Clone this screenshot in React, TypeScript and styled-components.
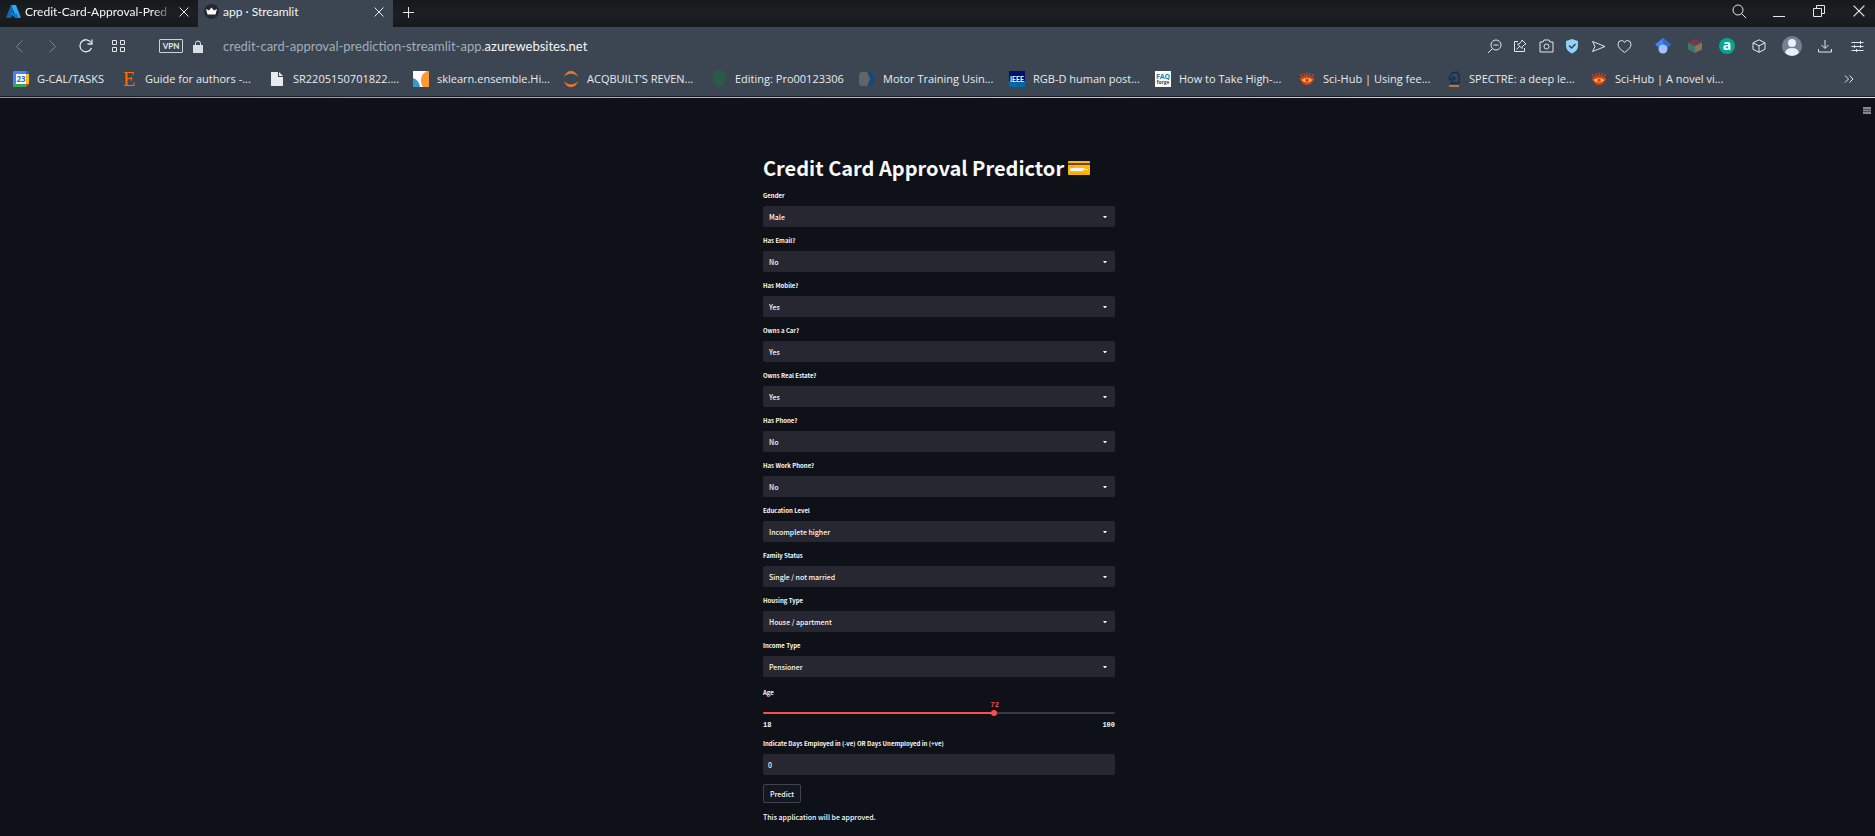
import React, { useState } from "react";
import type { ReactNode } from "react";
import styled, { createGlobalStyle, css } from "styled-components";

const GlobalStyle = createGlobalStyle`
  *, *::before, *::after { box-sizing: border-box; }
  body { margin: 0; background: #0e1117; }
  button, input, select { font: inherit; color: inherit; margin: 0; }
`;

/* ---------- browser window ---------- */

const BrowserChrome = styled.header`
  font-family: Lato, "Open Sans", sans-serif;
  font-size: 12px;
  line-height: 16px;
  color: #e8ebed;
  background: #3b4652;
`;

const TabStrip = styled.div`
  display: flex;
  height: 27px;
  background: linear-gradient(#16191c, #1c2023 50%, #171a1d);
`;

const Tab = styled.div<{ $active?: boolean }>`
  display: flex;
  align-items: center;
  gap: 4px;
  width: ${(p) => (p.$active ? 195 : 198)}px;
  padding: 0 4px 4px 6px;
  background: ${(p) => (p.$active ? "#3b4652" : "transparent")};
`;

const TabTitle = styled.span<{ $fade?: boolean }>`
  flex: 1;
  min-width: 0;
  white-space: nowrap;
  color: #f4f6f7;
  mask-image: ${(p) => (p.$fade ? "linear-gradient(to right, #000 88%, #0003)" : "none")};
`;

const IconButton = styled.button<{ $width: number; $dim?: boolean }>`
  display: flex;
  align-items: center;
  justify-content: center;
  flex: none;
  width: ${(p) => p.$width}px;
  padding: 0;
  border: 0;
  background: none;
  color: ${(p) => (p.$dim ? "#78828c" : "#e3e7ea")};
`;

const WindowControls = styled.div`
  display: flex;
  margin-left: auto;
  padding: 0 0 5px;
  margin-right: -4px;
`;

const Toolbar = styled.div`
  display: flex;
  align-items: center;
  height: 38px;
  padding: 0 2px 0 3px;
`;

const ToolGroup = styled.div`
  display: flex;
  align-items: center;
`;

const AddressGroup = styled.div`
  display: flex;
  align-items: center;
  flex: 1;
  gap: 10px;
  padding-left: 24px;
`;

const VpnBadge = styled.button`
  width: 24px;
  height: 14px;
  padding: 0;
  border: 1px solid #ccd1d5;
  border-radius: 1px;
  background: none;
  font-size: 8px;
  font-weight: 700;
  line-height: 12px;
  text-align: center;
`;

const Address = styled.a`
  padding-left: 10px;
  font-size: 13px;
  color: #a3adb7;
  text-decoration: none;
  white-space: nowrap;
  strong { font-weight: 400; color: #f4f6f7; }
`;

const ExtensionGroup = styled(ToolGroup)`
  padding-left: 10px;
`;

const BookmarkBar = styled.nav`
  display: flex;
  align-items: center;
  height: 31px;
  padding: 0 21px 3px 13px;
  font-family: "Open Sans", sans-serif;
  font-size: 11px;
`;

const Bookmark = styled.a<{ $width: number }>`
  display: flex;
  align-items: center;
  gap: 8px;
  flex: none;
  width: ${(p) => p.$width}px;
  color: inherit;
  text-decoration: none;
  white-space: nowrap;
`;

const MoreBookmarks = styled.button`
  display: flex;
  margin-left: auto;
  padding: 0;
  border: 0;
  background: none;
`;

const AccentLine = styled.div`
  height: 2px;
  border-top: 1px solid #1b1d22;
  background: linear-gradient(to right, #f0685c, #f99f5a 35%, #fbc95f 70%, #fbf06c);
`;

/* ---------- app page ---------- */

const AppHeader = styled.div`
  display: flex;
  justify-content: flex-end;
  padding: 9px 4px 0;
`;

const MenuButton = styled.button`
  display: flex;
  padding: 0;
  border: 0;
  background: none;
`;

const Main = styled.main`
  padding: 41px 0 16px 3px;
  font-family: "Noto Sans CJK SC", sans-serif;
  font-size: 7px;
  font-weight: 500;
  line-height: 10px;
  color: #fafafa;
`;

const Column = styled.form`
  display: flex;
  flex-direction: column;
  gap: 9px;
  max-width: 352px;
  margin: 0 auto;
`;

const Title = styled.h1`
  display: flex;
  align-items: center;
  gap: 4px;
  margin: 0;
  padding-bottom: 1px;
  font-size: 20px;
  font-weight: 700;
  line-height: 26px;
  white-space: nowrap;
`;

const Field = styled.div`
  display: flex;
  flex-direction: column;
  gap: 5px;
`;

const SliderField = styled(Field)`
  gap: 3px;
  padding-top: 2px;
`;

const Label = styled.label`
  font-size: 6px;
  font-weight: 700;
  line-height: 10px;
`;

const controlStyle = css`
  width: 100%;
  height: 21px;
  border: 0;
  border-radius: 2px;
  background-color: #262730;
  outline: none;
  appearance: none;
`;

const SelectBox = styled.div`
  display: grid;
  align-items: center;
  > * { grid-area: 1 / 1; }
  > svg { justify-self: end; margin-right: 8px; pointer-events: none; }
`;

const Select = styled.select`
  ${controlStyle}
  padding: 0 6px;
`;

const NumberInput = styled.input`
  ${controlStyle}
  padding: 0 5px;
  appearance: textfield;
  &::-webkit-inner-spin-button { display: none; }
`;

const SliderBox = styled.div`
  font-family: "Liberation Mono", monospace;
  font-size: 7px;
  font-weight: 700;
`;

const SliderValue = styled.output`
  display: block;
  width: 20px;
  height: 8px;
  margin-left: -10px;
  line-height: 8px;
  text-align: center;
  color: #ff4b4b;
`;

const Range = styled.input`
  display: block;
  width: 100%;
  height: 8px;
  background: transparent;
  appearance: none;
  &::-webkit-slider-runnable-track {
    height: 2px;
    border-radius: 1px;
    background: linear-gradient(to right, #ff4b4b var(--fill), #373a42 var(--fill));
  }
  &::-webkit-slider-thumb {
    width: 6px;
    height: 6px;
    margin-top: -2px;
    border-radius: 50%;
    background: #ff4b4b;
    appearance: none;
  }
`;

const SliderTicks = styled.div`
  display: flex;
  justify-content: space-between;
  padding-top: 3px;
`;

const SubmitButton = styled.button`
  align-self: flex-start;
  width: 38px;
  height: 19px;
  padding: 0;
  border: 1px solid #41444c;
  border-radius: 2px;
  background: #131720;
`;

const Result = styled.p`
  margin: 0;
`;

/* ---------- icons ---------- */

const Svg = styled.svg`
  flex: none;
  overflow: visible;
`;

type IconProps = { w?: number; h?: number; box?: string; sw?: number; children: ReactNode };
const Icon = ({ w = 16, h = w, box = `0 0 ${w} ${h}`, sw = 1, children }: IconProps) => (
  <Svg width={w} height={h} viewBox={box} fill="none" stroke="currentColor" strokeWidth={sw} aria-hidden="true">
    {children}
  </Svg>
);

const CloseIcon = ({ size = 10 }: { size?: number }) => (
  <Icon w={size} box="0 0 10 10" sw={1}><path d="M.5.5l9 9M9.5.5l-9 9" /></Icon>
);

const AzureIcon = () => (
  <Icon w={15}>
    <g stroke="none">
      <path d="M5 1h5L5 14H1.200Q0 14 .5 12.500z" fill="#1267b4" />
      <path d="M5.500 1h4.500l4.500 11.800Q14.800 14 13.600 14H9.800L4.600 9.600H8.500z" fill="#2fa8ee" />
      <path d="M4.600 9.600H11L12.500 14H9.800z" fill="#0b78d0" />
    </g>
  </Icon>
);

const CrownIcon = () => (
  <Icon w={15}>
    <g stroke="none">
      <circle cx="7.500" cy="7.500" r="7.500" fill="#262730" />
      <path d="M2 5l3 1.500L7.500 3.500 10 6.500 13 5l-1.500 5.500h-8z" fill="#fff" />
    </g>
  </Icon>
);

const SciHubIcon = () => (
  <Icon w={16}>
    <path d="M3.500 6.500L1.500 3M5.800 5.500L4.800 2M8 5.500V1.500M10.200 5.500l1-3.500M12.500 6.500l2-3.500" stroke="#d0432b" strokeWidth="1.200" />
    <path d="M.5 7.500Q8 2 15.500 7.500L14 10q-2 4-6 4t-6-4z" fill="#d23f26" stroke="none" />
    <path d="M2.500 9Q8 5 13.500 9 8 14 2.500 9z" fill="#f9c32c" stroke="none" />
    <circle cx="8" cy="9.200" r="1.800" fill="#d23f26" stroke="none" />
  </Icon>
);

const bookmarkIcons: Record<string, ReactNode> = {
  calendar: (
    <Icon w={16}>
      <g stroke="none">
        <path d="M1 0h12v3H0V1q0-1 1-1z" fill="#4285f4" />
        <path d="M13 0h2q1 0 1 1v2h-3z" fill="#1967d2" />
        <path d="M0 3h3v10H0z" fill="#4285f4" />
        <path d="M13 3h3v10h-3z" fill="#fbbc04" />
        <path d="M0 13h13v3H1q-1 0-1-1z" fill="#34a853" />
        <path d="M13 13h3l-3 3z" fill="#ea4335" />
        <path d="M3 3h10v10H3z" fill="#fff" />
        <text x="8" y="11" fontSize="8" fontWeight="700" textAnchor="middle" fill="#2b6bdc">23</text>
      </g>
    </Icon>
  ),
  elsevier: (
    <Icon w={14} h={16}>
      <text x="6" y="15" fontFamily="Liberation Serif, serif" fontSize="20" textAnchor="middle" fill="#ff6c00" stroke="none">E</text>
    </Icon>
  ),
  file: (
    <Icon w={16}>
      <path d="M2 1h7v5h5v9H2z" fill="#e8ebed" stroke="none" />
      <path d="M10 1l4 4h-4z" fill="#e8ebed" stroke="none" />
    </Icon>
  ),
  sklearn: (
    <Icon w={16}>
      <g stroke="none">
        <path d="M0 0h16v16H0z" fill="#fff" />
        <path d="M0 7q6 2 7 9H0z" fill="#3499cd" />
        <path d="M16 0h-2Q8 3 8 9q0 5 2 7h6z" fill="#ff9a33" />
      </g>
    </Icon>
  ),
  jupyter: (
    <Icon w={16}>
      <path d="M1 5.500Q3.500 0 8 0t7 5.500Q11.500 2.500 8 2.500T1 5.500zM1 10.500Q3.500 16 8 16t7-5.500Q11.500 13.500 8 13.500t-7-3z" fill="#f37726" stroke="none" />
    </Icon>
  ),
  shield: (
    <Icon w={16}>
      <path d="M3 0h10l1 2v7q0 4-6 7-6-3-6-7V2z" fill="#285c46" stroke="none" />
      <path d="M4 4.500h8M4 8.500h3M9 8.500h3M6 11.500h4" stroke="#36514d" />
    </Icon>
  ),
  arrow: (
    <Icon w={16}>
      <g stroke="none">
        <path d="M2 1h6l3 7-3 7H2q-2-1-2-3V4q0-2 2-3z" fill="#636466" />
        <path d="M9 1h3l4 7-4 7H9l3-7z" fill="#0d4b86" />
      </g>
    </Icon>
  ),
  ieee: (
    <Icon w={16}>
      <g stroke="none">
        <path d="M0 0h16v16H0z" fill="#05106c" />
        <path d="M0 10h16v6H0z" fill="#0369a5" />
        <text x="8" y="11" fontSize="7" fontWeight="700" textAnchor="middle" fontFamily="Lato, sans-serif" fill="#fff">IEEE</text>
      </g>
    </Icon>
  ),
  faq: (
    <Icon w={16}>
      <g stroke="none">
        <path d="M0 0h16v16H0z" fill="#fff" />
        <text x="8" y="8" fontSize="7" fontWeight="700" textAnchor="middle" fill="#1480bd">FAQ</text>
        <text x="8" y="13" fontSize="5" fontWeight="700" textAnchor="middle" fill="#45494d">forge</text>
      </g>
    </Icon>
  ),
  scihub: <SciHubIcon />,
  knight: (
    <Icon w={14} h={16}>
      <path d="M4 12Q5 9 8 8L7 6 3 9 2 7l3-5 5-1q3 3 2 11z" stroke="#0c2c55" strokeWidth="1.300" />
      <path d="M2 15h10" stroke="#e88a2c" strokeWidth="1.500" />
    </Icon>
  ),
};

const bookmarks: [string, string, number][] = [
  ["calendar", "G-CAL/TASKS", 110],
  ["elsevier", "Guide for authors -...", 146],
  ["file", "SR2205150701822....", 144],
  ["sklearn", "sklearn.ensemble.Hi...", 150],
  ["jupyter", "ACQBUILT'S REVEN...", 148],
  ["shield", "Editing: Pro00123306", 148],
  ["arrow", "Motor Training Usin...", 150],
  ["ieee", "RGB-D human post...", 146],
  ["faq", "How to Take High-...", 144],
  ["scihub", "Sci-Hub | Using fee...", 148],
  ["knight", "SPECTRE: a deep le...", 144],
  ["scihub", "Sci-Hub | A novel vi...", 148],
];

const pageTools: [string, ReactNode][] = [
  ["Zoom", <Icon w={15}><circle cx="9" cy="6" r="5" /><path d="M5.500 9.500L1 14M6.500 6h5" /></Icon>],
  ["Edit page", <Icon w={14}><path d="M5 2.500H1.500v10h10V9M3.500 10.500L7 7M9 1l4 4-1.500.5-2.500 2.500v1.500L4.500 5H6l2.500-2.500z" /></Icon>],
  ["Snapshot", <Icon w={15}><path d="M1 3h3l1-2h5l1 2h3v10H1z" /><circle cx="7.500" cy="7.500" r="2.500" /></Icon>],
  ["Protection", <Icon w={14}><path d="M7 0l6 2v5q0 5-6 7.500Q1 12 1 7V2z" fill="#8fd3fb" stroke="none" /><path d="M4 6.500L6.500 9 10.500 5" stroke="#34424f" strokeWidth="1.500" /></Icon>],
  ["Send", <Icon w={15}><path d="M1.500 2.500l12.500 5-12.500 5 2.500-5z" /></Icon>],
  ["Favourite", <Icon w={15}><path d="M7.500 13.500Q1 9 1 5.500 1 1.500 4.500 1.500q2 0 3 2 1-2 3-2Q14 1.500 14 5.500q0 3.500-6.500 8z" /></Icon>],
];

const extensions: [string, number, ReactNode][] = [
  ["Scholar", 32, <Icon w={16}><g stroke="none"><path d="M8 0l8 6.500-5 4H5l-5-4z" fill="#4285f4" /><path d="M8 0l8 6.500-5 4L8 7z" fill="#356ac3" /><circle cx="8" cy="11" r="4.500" fill="#a0c3ff" /></g></Icon>],
  ["Cube", 32, <Icon w={14}><g stroke="none"><path d="M7 0l7 3.500L7 7 0 3.500z" fill="#76384a" /><path d="M0 3.500L7 7v7L0 10.500z" fill="#3f7468" /><path d="M14 3.500L7 7v7l7-3.500z" fill="#82765a" /></g></Icon>],
  ["Assistant", 32, <Icon w={16}><circle cx="8" cy="8" r="8" fill="#05a596" stroke="none" /><text x="8" y="12" fontSize="14" fontWeight="700" fontFamily="Open Sans, sans-serif" textAnchor="middle" fill="#fff" stroke="none">a</text></Icon>],
  ["Extensions", 32, <Icon w={14}><path d="M7 .8l6 3v6.500l-6 3-6-3V3.800zM1 3.800l6 3 6-3M7 6.800v6.500" /></Icon>],
  ["Profile", 34, <Icon w={20}><g stroke="none"><circle cx="10" cy="10" r="10" fill="#718293" /><circle cx="10" cy="7" r="4" fill="#e9eef5" /><path d="M3 17q1-5 7-5t7 5q-3 3-7 3t-7-3z" fill="#e9eef5" /></g></Icon>],
  ["Downloads", 32, <Icon w={14}><path d="M7 1v8M3.500 6L7 9.500 10.500 6M.5 10v3h13v-3" /></Icon>],
  ["Easy setup", 32, <Icon w={13}><path d="M.5 2.500h12M.5 6.500h12M.5 10.500h12M9.500 1v3M3.500 5v3M9.500 5v3M5.500 9v3" /></Icon>],
];

const CardIcon = () => (
  <Icon w={22} h={15}>
    <g stroke="none">
      <path d="M1 0h20q1 0 1 1v12q0 1-1 1H1q-1 0-1-1V1q0-1 1-1z" fill="#ffb900" />
      <path d="M0 2h22v2H0z" fill="#6e4136" />
      <path d="M2 8h14l1-1H3z" fill="#f4f4f4" />
      <path d="M2 8h13v2H2z" fill="#f4f4f4" />
      <path d="M15 8h5v1h-5z" fill="#ffe9b0" />
      <path d="M2 5h4v1H2zM2 12h17v1H2z" fill="#e89c0c" />
    </g>
  </Icon>
);

const Caret = () => (
  <svg width="4" height="2" viewBox="0 0 4 2" aria-hidden="true"><path d="M0 0h4L2.500 2h-1z" fill="#fafafa" /></svg>
);

/* ---------- form ---------- */

const selects: [string, string[], string][] = [
  ["Gender", ["Male", "Female"], "Male"],
  ["Has Email?", ["Yes", "No"], "No"],
  ["Has Mobile?", ["Yes", "No"], "Yes"],
  ["Owns a Car?", ["Yes", "No"], "Yes"],
  ["Owns Real Estate?", ["Yes", "No"], "Yes"],
  ["Has Phone?", ["Yes", "No"], "No"],
  ["Has Work Phone?", ["Yes", "No"], "No"],
  ["Education Level", ["Incomplete higher"], "Incomplete higher"],
  ["Family Status", ["Single / not married"], "Single / not married"],
  ["Housing Type", ["House / apartment"], "House / apartment"],
  ["Income Type", ["Pensioner"], "Pensioner"],
];

const MIN_AGE = 18;
const MAX_AGE = 100;

function PredictorForm() {
  const [age, setAge] = useState(72);
  const fill = `${((age - MIN_AGE) / (MAX_AGE - MIN_AGE)) * 100}%`;
  return (
    <Column onSubmit={(e) => e.preventDefault()}>
      <Title>Credit Card Approval Predictor <CardIcon /></Title>
      {selects.map(([label, options, value], i) => (
        <Field key={label}>
          <Label htmlFor={`field-${i}`}>{label}</Label>
          <SelectBox>
            <Select id={`field-${i}`} defaultValue={value}>
              {options.map((o) => <option key={o}>{o}</option>)}
            </Select>
            <Caret />
          </SelectBox>
        </Field>
      ))}
      <SliderField>
        <Label htmlFor="age">Age</Label>
        <SliderBox>
          <div style={{ paddingLeft: fill }}>
            <SliderValue htmlFor="age">{age}</SliderValue>
          </div>
          <Range
            id="age"
            type="range"
            min={MIN_AGE}
            max={MAX_AGE}
            value={age}
            onChange={(e) => setAge(Number(e.target.value))}
            style={{ "--fill": fill } as React.CSSProperties}
          />
          <SliderTicks><span>{MIN_AGE}</span><span>{MAX_AGE}</span></SliderTicks>
        </SliderBox>
      </SliderField>
      <Field>
        <Label htmlFor="days">Indicate Days Employed in (-ve) OR Days Unemployed in (+ve)</Label>
        <NumberInput id="days" type="number" defaultValue={0} />
      </Field>
      <SubmitButton type="submit">Predict</SubmitButton>
      <Result>This application will be approved.</Result>
    </Column>
  );
}

export default function App() {
  return (
    <>
      <GlobalStyle />
      <BrowserChrome>
        <TabStrip>
          <Tab>
            <AzureIcon />
            <TabTitle $fade>Credit-Card-Approval-Pred</TabTitle>
            <IconButton $width={20} aria-label="Close tab"><CloseIcon /></IconButton>
          </Tab>
          <Tab $active>
            <CrownIcon />
            <TabTitle>app · Streamlit</TabTitle>
            <IconButton $width={20} aria-label="Close tab"><CloseIcon /></IconButton>
          </Tab>
          <IconButton $width={30} aria-label="New tab"><Icon w={11}><path d="M5.500 0v11M0 5.500h11" transform="translate(0 -1)" /></Icon></IconButton>
          <WindowControls>
            <IconButton $width={40} aria-label="Search tabs"><Icon w={15}><circle cx="6" cy="6" r="5" /><path d="M9.500 9.500L14 14" /></Icon></IconButton>
            <IconButton $width={40} aria-label="Minimise"><Icon w={12}><path d="M0 11.500h12" /></Icon></IconButton>
            <IconButton $width={40} aria-label="Restore"><Icon w={12}><path d="M.5 3.500h8v8h-8zM3.500 3.500v-3h8v8h-3" /></Icon></IconButton>
            <IconButton $width={40} aria-label="Close window"><CloseIcon size={12} /></IconButton>
          </WindowControls>
        </TabStrip>
        <Toolbar>
          <ToolGroup>
            <IconButton $width={33} $dim aria-label="Back"><Icon w={7} h={13}><path d="M6.500.5l-6 6 6 6" /></Icon></IconButton>
            <IconButton $width={33} $dim aria-label="Forward"><Icon w={7} h={13}><path d="M.5.5l6 6-6 6" /></Icon></IconButton>
            <IconButton $width={33} aria-label="Reload"><Icon w={14} sw={1.3}><path d="M12.500 9A6 6 0 1 1 12 3.500M13 .5v4.500H8.500" /></Icon></IconButton>
            <IconButton $width={33} aria-label="Speed dial"><Icon w={13} h={12}><path d="M.5.5h4v4h-4zM8.500.5h4v4h-4zM.5 7.500h4v4h-4zM8.500 7.500h4v4h-4z" /></Icon></IconButton>
          </ToolGroup>
          <AddressGroup>
            <VpnBadge>VPN</VpnBadge>
            <Icon w={10} h={13}><path d="M2.500 6V3.500Q2.500 1 5 1t2.500 2.500V6" /><path d="M0 5h10v8H0z" fill="#d9dee2" stroke="none" /></Icon>
            <Address href="#">credit-card-approval-prediction-streamlit-app.<strong>azurewebsites.net</strong></Address>
          </AddressGroup>
          <ToolGroup>
            {pageTools.map(([name, icon]) => <IconButton key={name} $width={26} aria-label={name}>{icon}</IconButton>)}
          </ToolGroup>
          <ExtensionGroup>
            {extensions.map(([name, width, icon]) => <IconButton key={name} $width={width} aria-label={name}>{icon}</IconButton>)}
          </ExtensionGroup>
        </Toolbar>
        <BookmarkBar>
          {bookmarks.map(([icon, text, width]) => (
            <Bookmark key={text} href="#" $width={width}>{bookmarkIcons[icon]}{text}</Bookmark>
          ))}
          <MoreBookmarks aria-label="More bookmarks"><Icon w={10} h={8}><path d="M1 .5L4.500 4 1 7.500M5.500.5L9 4 5.500 7.500" /></Icon></MoreBookmarks>
        </BookmarkBar>
        <AccentLine />
      </BrowserChrome>
      <AppHeader>
        <MenuButton aria-label="Main menu"><Icon w={8} h={7} sw={2}><path d="M0 1h8M0 3.500h8M0 6h8" stroke="#85878c" /></Icon></MenuButton>
      </AppHeader>
      <Main><PredictorForm /></Main>
    </>
  );
}
